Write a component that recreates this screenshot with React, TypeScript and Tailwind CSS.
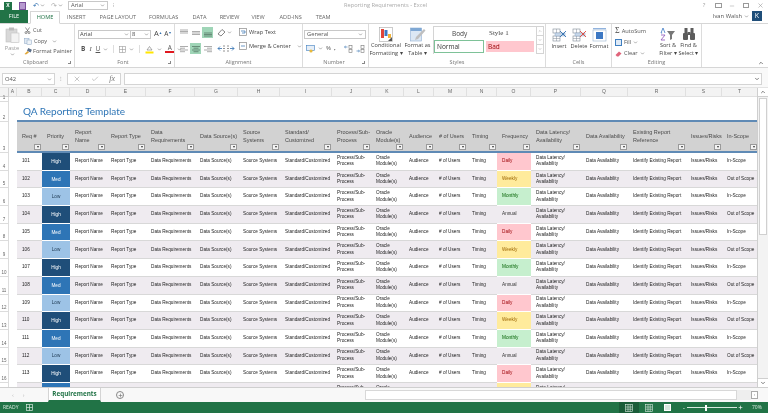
import { ChevronDown, ChevronUp, X, Check, Plus, Minus } from 'lucide-react'

const columns = ['A', 'B', 'C', 'D', 'E', 'F', 'G', 'H', 'I', 'J', 'K', 'L', 'M', 'N', 'O', 'P', 'Q', 'R', 'S', 'T']

const headers = [
  ['Req #'],
  ['Priority'],
  ['Report', 'Name'],
  ['Report Type'],
  ['Data', 'Requirements'],
  ['Data Source(s)'],
  ['Source', 'Systems'],
  ['Standard/', 'Customized'],
  ['Process/Sub-', 'Process'],
  ['Oracle', 'Module(s)'],
  ['Audience'],
  ['# of Users'],
  ['Timing'],
  ['Frequency'],
  ['Data Latency/', 'Availability'],
  ['Data Availability'],
  ['Existing Report', 'Reference'],
  ['Issues/Risks'],
  ['In-Scope'],
]

const priorities = [
  { label: 'High', cls: 'bg-[#1f4e79] text-white' },
  { label: 'Med', cls: 'bg-[#2e75b6] text-white' },
  { label: 'Low', cls: 'bg-[#9dc3e6] text-[#1f3a54]' },
]

const frequencies = [
  { label: 'Daily', cls: 'bg-[#ffc7ce] text-[#9c0006]' },
  { label: 'Weekly', cls: 'bg-[#ffeb9c] text-[#9c6500]' },
  { label: 'Monthly', cls: 'bg-[#c6efce] text-[#006100]' },
  { label: 'Annual', cls: 'text-[#333]' },
]

const rows = Array.from({ length: 14 }, (_, i) => i)

const gridCols =
  'grid-cols-[9px_8px_25px_28px_36px_40px_49px_43px_42px_52px_39px_33px_30px_33px_30px_34px_50px_47px_58px_36px_36px]'

function Caret() {
  return <ChevronDown className="size-[5px] shrink-0 text-[#666]" strokeWidth={2.5} />
}

function FilterButton() {
  return (
    <span className="absolute bottom-[1px] right-[1px] flex h-[6px] w-[7px] items-center justify-center border border-[#9a9a9a] bg-[#f4f4f4]">
      <span className="h-0 w-0 border-x-[1.5px] border-t-[2px] border-x-transparent border-t-[#333]" />
    </span>
  )
}

function Group({ label, width, launcher, children }: { label: string; width: string; launcher?: boolean; children: React.ReactNode }) {
  return (
    <div className={`flex shrink-0 flex-col border-r border-[#dcdcdc] ${width}`}>
      <div className="flex min-h-0 flex-1">{children}</div>
      <div className="flex h-[10px] items-center px-[3px] text-[5.5px] text-[#777]">
        <span className="flex-1 text-center">{label}</span>
        {launcher && <span className="h-[3px] w-[3px] border-b border-r border-[#888]" />}
      </div>
    </div>
  )
}

function BigButton({ lines, width, children }: { lines: string[]; width: string; children: React.ReactNode }) {
  return (
    <div className={`flex shrink-0 flex-col items-center pt-[2px] text-[5.6px] leading-[7.5px] text-[#444] ${width}`}>
      <div className="flex h-[17px] items-center">{children}</div>
      {lines.map((l) => (
        <span key={l} className="whitespace-nowrap">{l}</span>
      ))}
    </div>
  )
}

function Ribbon() {
  return (
    <div className="flex h-[44px] shrink-0 border-b border-[#d6d6d6] bg-white font-['Open_Sans',sans-serif]">
      <Group label="Clipboard" width="w-[75px]" launcher>
        <div className="flex w-[24px] flex-col items-center pt-[3px] text-[5.6px] leading-[7px] text-[#999]">
          <svg width="15" height="16" viewBox="0 0 15 16">
            <rect x="1" y="2" width="11" height="13" fill="#d8d8d8" stroke="#c0c0c0" strokeWidth="0.6" />
            <rect x="4" y="0.5" width="5" height="3" fill="#bbb" />
            <rect x="6" y="6" width="8" height="9.5" fill="#f3f3f3" stroke="#c4c4c4" strokeWidth="0.6" />
          </svg>
          <span className="mt-[2px]">Paste</span>
          <Caret />
        </div>
        <div className="flex flex-col gap-[3.5px] pt-[3px] text-[5.6px] leading-[7px] text-[#555]">
          <div className="flex items-center gap-[2px]">
            <svg width="7" height="7" viewBox="0 0 7 7" fill="none" stroke="#666" strokeWidth="0.7">
              <path d="M1.5 0.5 4.5 5M5.5 0.5 2.5 5" />
              <circle cx="2" cy="5.6" r="1" />
              <circle cx="5" cy="5.6" r="1" />
            </svg>
            Cut
          </div>
          <div className="flex items-center gap-[2px]">
            <svg width="8" height="7" viewBox="0 0 8 7">
              <rect x="0.5" y="0.5" width="4.5" height="5" fill="#dfe8f2" stroke="#8ba6c4" strokeWidth="0.5" />
              <rect x="3" y="2" width="4.5" height="4.5" fill="#eef3f8" stroke="#8ba6c4" strokeWidth="0.5" />
            </svg>
            Copy
            <span className="ml-[3px]"><Caret /></span>
          </div>
          <div className="flex items-center gap-[1px] whitespace-nowrap">
            <svg width="8" height="7" viewBox="0 0 8 7">
              <path d="M0.5 6 3.5 3 5 4.5 2 6.5Z" fill="#e2a83a" />
              <rect x="3.5" y="0.5" width="4" height="3" fill="#5b6f8a" transform="rotate(25 5 2)" />
            </svg>
            Format Painter
          </div>
        </div>
      </Group>

      <Group label="Font" width="w-[100px]" launcher>
        <div className="flex flex-1 flex-col gap-[6px] pl-[3px] pt-[6px] text-[#444]">
          <div className="flex h-[8px] items-center">
            <div className="flex h-[9px] w-[53px] items-center justify-between border border-[#c8c8c8] px-[1px] text-[5.8px]">
              Arial <Caret />
            </div>
            <div className="flex h-[9px] w-[20px] items-center justify-between border border-l-0 border-[#c8c8c8] px-[1px] text-[5.8px]">
              8 <Caret />
            </div>
            <span className="ml-[3px] text-[7.5px]">A</span>
            <span className="mb-[3px] text-[3.5px] text-[#2f6fb0]">▲</span>
            <span className="ml-[2px] text-[6.5px]">A</span>
            <span className="mb-[3px] text-[3.5px] text-[#2f6fb0]">▼</span>
          </div>
          <div className="flex h-[10px] items-center gap-[3px] pl-[3px] text-[6.5px] text-[#555]">
            <span className="font-bold">B</span>
            <span className="px-[1px] font-['Liberation_Serif',serif] italic">I</span>
            <span className="underline">U</span>
            <Caret />
            <span className="mx-[2px] h-[8px] w-px bg-[#ddd]" />
            <svg width="7" height="7" viewBox="0 0 7 7" fill="none" stroke="#999" strokeWidth="0.6">
              <rect x="0.5" y="0.5" width="6" height="6" />
              <path d="M3.5 0.5v6M0.5 3.5h6" />
            </svg>
            <Caret />
            <span className="mx-[2px] h-[8px] w-px bg-[#ddd]" />
            <svg width="9" height="9" viewBox="0 0 9 9">
              <path d="M2 5 4.5 1.5 7 5Z" fill="#fff" stroke="#777" strokeWidth="0.6" />
              <rect x="0.5" y="6.5" width="8" height="2" fill="#ffe600" />
            </svg>
            <Caret />
            <div className="flex w-[9px] flex-col items-center text-[6.5px] leading-[6.5px]">
              A
              <span className="h-[2px] w-[9px] bg-[#e0181f]" />
            </div>
            <Caret />
          </div>
        </div>
      </Group>

      <Group label="Alignment" width="w-[128px]">
        <div className="flex flex-col gap-[5px] pl-[3px] pt-[3px]">
          <div className="flex items-center gap-[1px]">
            <AlignIcon kind="top" />
            <AlignIcon kind="middle" />
            <AlignIcon kind="bottom" active />
            <svg className="ml-[3px]" width="9" height="9" viewBox="0 0 9 9" fill="none" stroke="#666" strokeWidth="0.8">
              <path d="M1 6 5 1.5 8 4 4 8Z" />
            </svg>
            <Caret />
          </div>
          <div className="flex items-center gap-[1px]">
            <AlignIcon kind="left" />
            <AlignIcon kind="center" active />
            <AlignIcon kind="right" />
            <svg className="ml-[3px]" width="18" height="9" viewBox="0 0 18 9" fill="none" strokeWidth="0.8">
              <path d="M1 4.5h4M1 4.5l2-2M1 4.5l2 2" stroke="#2f6fb0" />
              <path d="M6 2h2M6 4.5h2M6 7h2M10 2h2M10 4.5h2M10 7h2" stroke="#777" />
              <path d="M17 4.5h-4M17 4.5l-2-2M17 4.5l-2 2" stroke="#2f6fb0" />
            </svg>
          </div>
        </div>
        <div className="ml-[4px] flex flex-col gap-[6px] pt-[4px] text-[5.7px] leading-[8px] text-[#444]">
          <div className="flex items-center gap-[2px]">
            <svg width="8" height="8" viewBox="0 0 8 8" fill="none" strokeWidth="0.7">
              <rect x="0.5" y="0.5" width="7" height="7" stroke="#8a8a8a" />
              <path d="M2 3h4v2H3" stroke="#2f6fb0" />
            </svg>
            Wrap Text
          </div>
          <div className="flex items-center gap-[2px] whitespace-nowrap">
            <svg width="8" height="8" viewBox="0 0 8 8" fill="none" strokeWidth="0.7">
              <rect x="0.5" y="0.5" width="7" height="7" stroke="#8a8a8a" />
              <path d="M2 4h4" stroke="#2f6fb0" />
            </svg>
            Merge &amp; Center
            <span className="ml-[4px]"><Caret /></span>
          </div>
        </div>
      </Group>

      <Group label="Number" width="w-[66px]" launcher>
        <div className="flex flex-1 flex-col gap-[5px] pl-[1px] pt-[6px] pr-[2px] text-[#555]">
          <div className="flex h-[9px] items-center justify-between border border-[#c8c8c8] px-[2px] text-[5.8px]">
            General <Caret />
          </div>
          <div className="flex items-center gap-[3px] pl-[2px] text-[6px]">
            <svg width="9" height="8" viewBox="0 0 9 8">
              <rect x="0.5" y="0.5" width="8" height="5" fill="#e6eef7" stroke="#3f7fc0" strokeWidth="0.6" />
              <circle cx="5" cy="6" r="1.6" fill="#e8b93a" />
            </svg>
            <Caret />
            <span>%</span>
            <span className="font-bold">,</span>
            <svg className="ml-[5px]" width="9" height="8" viewBox="0 0 9 8" fill="none" stroke="#2f6fb0" strokeWidth="0.6">
              <path d="M0.5 2h3M0.5 2l1.2-1M0.5 2l1.2 1" />
              <rect x="5" y="0.5" width="3" height="3" stroke="#777" />
              <rect x="5" y="4.5" width="3" height="3" stroke="#777" />
            </svg>
            <svg width="9" height="8" viewBox="0 0 9 8" fill="none" stroke="#2f6fb0" strokeWidth="0.6">
              <path d="M0.5 6h3M3.5 6l-1.2-1M3.5 6l-1.2 1" />
              <rect x="5" y="0.5" width="3" height="3" stroke="#777" />
              <rect x="5" y="4.5" width="3" height="3" stroke="#777" />
            </svg>
          </div>
        </div>
      </Group>

      <Group label="Styles" width="w-[177px]">
        <BigButton lines={['Conditional', 'Formatting ▾']} width="w-[34px]">
          <svg width="14" height="15" viewBox="0 0 14 15">
            <rect x="0.5" y="0.5" width="13" height="14" fill="#fff" stroke="#a8a8a8" strokeWidth="0.6" />
            <rect x="2" y="2" width="3" height="9" fill="#e0453a" />
            <rect x="5.5" y="3" width="3" height="6" fill="#3c78c4" />
            <rect x="9" y="7" width="3" height="4" fill="#f0b43a" />
            <path d="M9 14 13 10v4Z" fill="#555" />
          </svg>
        </BigButton>
        <BigButton lines={['Format as', 'Table ▾']} width="w-[29px]">
          <svg width="16" height="15" viewBox="0 0 16 15">
            <rect x="0.5" y="1" width="11" height="13" fill="#dce8f4" stroke="#8fb0d4" strokeWidth="0.6" />
            <rect x="0.5" y="1" width="11" height="3" fill="#7fa8d4" />
            <path d="M6 10 14 2l1.5 1.5L8 12l-3 1Z" fill="#bfbfbf" />
          </svg>
        </BigButton>
        <div className="ml-[1px] mt-[2px] flex h-[28px] w-[103px] flex-col border-l border-t border-[#d4d4d4] text-[6.5px] text-[#444]">
          <div className="flex h-[13px] items-center">
            <span className="w-[54px] pl-[18px]">Body</span>
            <span className="pl-[1px] font-['Liberation_Serif',serif] text-[7px]">Style 1</span>
          </div>
          <div className="flex h-[13px] items-center gap-[2px]">
            <span className="flex h-[13px] w-[50px] items-center border border-[#7ec298] pl-[2px] text-[#333]">Normal</span>
            <span className="flex h-[11px] w-[48px] items-center bg-[#ffc7ce] pl-[2px] text-[#9c0006]">Bad</span>
          </div>
        </div>
        <div className="mt-[2px] flex h-[28px] w-[8px] shrink-0 flex-col self-start border border-[#d4d4d4] text-[#777]">
          <span className="flex flex-1 items-center justify-center"><ChevronUp className="size-[4px]" /></span>
          <span className="flex flex-1 items-center justify-center border-y border-[#d4d4d4]"><ChevronDown className="size-[4px]" /></span>
          <span className="flex flex-1 items-center justify-center"><ChevronDown className="size-[4px]" /></span>
        </div>
      </Group>

      <Group label="Cells" width="w-[66px]">
        <div className="ml-[3px] flex">
          <BigButton lines={['Insert']} width="w-[20px]">
            <CellIcon accent="#2f6fb0" />
          </BigButton>
          <BigButton lines={['Delete']} width="w-[20px]">
            <CellIcon accent="#e0453a" />
          </BigButton>
          <BigButton lines={['Format']} width="w-[20px]">
            <svg width="15" height="14" viewBox="0 0 15 14">
              <rect x="1" y="2" width="13" height="11" fill="#fff" stroke="#9ab4d0" strokeWidth="0.6" />
              <rect x="4" y="4" width="7" height="7" fill="#3c78c4" />
              <path d="M1 0.7h13" stroke="#3c78c4" strokeWidth="0.7" />
            </svg>
          </BigButton>
        </div>
      </Group>

      <div className="flex w-[90px] shrink-0 flex-col border-r border-[#dcdcdc]">
        <div className="flex min-h-0 flex-1">
          <div className="flex w-[46px] flex-col gap-[3px] pl-[3px] pt-[3px] text-[5.7px] leading-[8px] text-[#555]">
            <div className="flex items-center gap-[2px]">
              <span className="font-['Liberation_Serif',serif] text-[8px] leading-[8px] text-[#444]">Σ</span>
              AutoSum
            </div>
            <div className="flex items-center gap-[2px]">
              <span className="h-[7px] w-[7px] border border-[#3f7fc0] bg-[#dfeaf6]" />
              Fill
              <Caret />
            </div>
            <div className="flex items-center gap-[2px]">
              <svg width="7" height="7" viewBox="0 0 7 7">
                <path d="M0.5 5 4 1.5 6.5 3.5 3.5 6.5H2Z" fill="#e0647a" />
              </svg>
              Clear
              <Caret />
            </div>
          </div>
          <BigButton lines={['Sort &', 'Filter ▾']} width="w-[20px]">
            <svg width="16" height="14" viewBox="0 0 16 14">
              <path d="M3 1 1 6h1.2M3 1l2 5" stroke="#3c78c4" fill="none" strokeWidth="0.8" />
              <path d="M1 8h4L1 13h4" stroke="#8a52b8" fill="none" strokeWidth="0.8" />
              <path d="M7 4h8l-3 4v4l-2 1V8Z" fill="#777" />
            </svg>
          </BigButton>
          <BigButton lines={['Find &', 'Select ▾']} width="w-[21px]">
            <svg width="14" height="14" viewBox="0 0 14 14" fill="#5c5c5c">
              <rect x="1" y="6" width="5" height="7" rx="1" />
              <rect x="8" y="6" width="5" height="7" rx="1" />
              <rect x="2.5" y="1" width="3" height="5" />
              <rect x="8.5" y="1" width="3" height="5" />
              <rect x="5.5" y="5" width="3" height="3" />
            </svg>
          </BigButton>
        </div>
        <div className="flex h-[10px] items-center justify-center text-[5.5px] text-[#777]">Editing</div>
      </div>

      <div className="flex flex-1 items-end justify-end pb-[1px] pr-[4px]">
        <ChevronUp className="size-[6px] text-[#555]" strokeWidth={3} />
      </div>
    </div>
  )
}

function AlignIcon({ kind, active }: { kind: string; active?: boolean }) {
  const lines: Record<string, string> = {
    top: 'M1 2h8M1 3.5h8M1 5h8',
    middle: 'M1 3.5h8M1 5h8M1 6.5h8',
    bottom: 'M1 5h8M1 6.5h8M1 8h8',
    left: 'M1 2.5h8M1 4.2h5M1 6h8M1 7.7h5',
    center: 'M1 2.5h8M2.5 4.2h5M1 6h8M2.5 7.7h5',
    right: 'M1 2.5h8M4 4.2h5M1 6h8M4 7.7h5',
  }
  return (
    <span className={`flex h-[11px] w-[11px] items-center justify-center ${active ? 'bg-[#9fd5b7]' : ''}`}>
      <svg width="10" height="10" viewBox="0 0 10 10" fill="none" stroke={active ? '#4f6f5d' : '#8a8a8a'} strokeWidth="0.7">
        <path d={lines[kind]} />
      </svg>
    </span>
  )
}

function CellIcon({ accent }: { accent: string }) {
  return (
    <svg width="15" height="14" viewBox="0 0 15 14" fill="none">
      <rect x="1" y="1" width="7" height="4" stroke="#7f8a96" strokeWidth="0.6" />
      <rect x="1" y="8" width="7" height="5" stroke="#7f8a96" strokeWidth="0.6" />
      <path d="M1 10.5h7M4.5 8v5M4.5 1v4" stroke="#7f8a96" strokeWidth="0.5" />
      <rect x="3" y="5" width="10" height="3" fill="#c9d9ea" stroke="#7f9cc0" strokeWidth="0.4" />
      <path d="M8 3l6 6M14 3l-6 6" stroke={accent} strokeWidth="0.9" />
    </svg>
  )
}

function TitleBar() {
  return (
    <div className="flex h-[11px] shrink-0 items-center bg-white font-['Open_Sans',sans-serif]">
      <div className="flex w-[344px] items-center pl-[4px]">
        <span className="flex h-[8px] w-[8px] items-center justify-center bg-[#217346] text-[5px] font-bold text-white">X</span>
        <span className="ml-[7px] h-[8px] w-[7px] border border-[#7a4f9a] bg-[#b79ad0]" />
        <span className="ml-[7px] text-[7px] leading-[8px] text-[#2f6fb0]">↶</span>
        <span className="ml-[1px]"><Caret /></span>
        <span className="ml-[6px] text-[7px] leading-[8px] text-[#aaa]">↷</span>
        <span className="ml-[1px]"><Caret /></span>
        <div className="ml-[5px] flex h-[9px] w-[40px] items-center justify-between border border-[#c8c8c8] px-[2px] text-[5.8px] text-[#555]">
          Arial <Caret />
        </div>
        <span className="ml-[5px] text-[5px] text-[#777]">⁝</span>
      </div>
      <span className="text-[5.7px] text-[#aaa]">Reporting Requirements - Excel</span>
      <div className="ml-auto flex items-center pr-[1px] text-[#9a9a9a]">
        <span className="flex w-[14px] justify-center text-[6px] leading-[7px]">?</span>
        <span className="flex w-[14px] justify-center"><span className="h-[5px] w-[7px] border border-[#9a9a9a]" /></span>
        <span className="flex w-[14px] justify-center"><Minus className="size-[6px]" /></span>
        <span className="flex w-[14px] justify-center"><span className="h-[5px] w-[6px] border border-[#9a9a9a]" /></span>
        <span className="flex w-[14px] justify-center"><X className="size-[7px]" /></span>
      </div>
    </div>
  )
}

function TabBar() {
  const tabs = [
    ['INSERT', 'ml-[7px]'],
    ['PAGE LAYOUT', 'ml-[14px]'],
    ['FORMULAS', 'ml-[13px]'],
    ['DATA', 'ml-[14px]'],
    ['REVIEW', 'ml-[13px]'],
    ['VIEW', 'ml-[12px]'],
    ['ADD-INS', 'ml-[15px]'],
    ['TEAM', 'ml-[14px]'],
  ]
  return (
    <div className="flex h-[13px] shrink-0 items-end border-b border-[#d6d6d6] bg-white font-['Open_Sans',sans-serif] text-[5.6px] text-[#666]">
      <div className="flex h-[13px] w-[28px] items-center justify-center bg-[#217346] text-white">FILE</div>
      <div className="-mb-px ml-[2px] flex h-[13px] w-[30px] items-center justify-center border border-[#d6d6d6] border-b-white bg-white text-[#217346]">HOME</div>
      {tabs.map(([t, m]) => (
        <div key={t} className={`flex h-[12px] items-center whitespace-nowrap ${m}`}>{t}</div>
      ))}
      <div className="ml-auto flex h-[13px] items-center pb-[1px] pr-[6px] text-[#555]">
        <span className="text-[5.8px]">Ivan Walsh</span>
        <span className="ml-[2px]"><Caret /></span>
        <span className="ml-[3px] flex h-[10px] w-[10px] items-center justify-center bg-[#1f4e79] text-[7px] text-white">K</span>
      </div>
    </div>
  )
}

function FormulaBar() {
  return (
    <div className="flex h-[20px] shrink-0 items-center gap-[3px] border-b border-[#e3e3e3] bg-[#f9f9f9] pl-[2px] pr-[6px] pt-[3px] font-['Open_Sans',sans-serif]">
      <div className="flex h-[12px] w-[53px] items-center justify-between border border-[#d4d4d4] bg-white px-[2px] text-[5.8px] text-[#555]">
        O42 <Caret />
      </div>
      <span className="mx-[2px] text-[6px] text-[#999]">⁝</span>
      <div className="flex h-[12px] w-[54px] items-center justify-around border border-[#d4d4d4] bg-white text-[#aaa]">
        <X className="size-[8px]" />
        <Check className="size-[8px]" />
        <span className="font-['Liberation_Serif',serif] text-[8px] italic text-[#777]">fx</span>
      </div>
      <div className="flex h-[12px] flex-1 items-center justify-end border border-[#d4d4d4] bg-white pr-[1px]">
        <ChevronDown className="size-[6px] text-[#555]" strokeWidth={3} />
      </div>
    </div>
  )
}

function Cell({ lines, className = '' }: { lines?: string[]; className?: string }) {
  return (
    <div className={`flex flex-col justify-center overflow-hidden whitespace-nowrap pl-[5px] leading-[6.5px] ${className}`}>
      {lines?.map((l) => <span key={l}>{l}</span>)}
    </div>
  )
}

function Sheet() {
  return (
    <div className="flex min-h-0 flex-1 border-b border-[#cfcfcf] bg-white font-['Liberation_Sans',sans-serif]">
      <div className={`grid min-w-0 flex-1 content-start overflow-hidden ${gridCols} grid-rows-[9px_5px_20px_31px] auto-rows-[17.7px]`}>
        <div className="border-b border-r border-[#cfcfcf] bg-[#f3f3f3]" />
        {columns.map((c) => (
          <div key={c} className="flex items-center justify-center border-b border-r border-[#e0e0e0] bg-[#f3f3f3] text-[5px] text-[#666]">{c}</div>
        ))}

        <RowNumber n={1} />
        <div className="col-span-20" />
        <RowNumber n={2} />
        <div />
        <div className="col-span-19 flex items-center border-b-2 border-[#5f8ab5] pl-[6px]">
          <span className="whitespace-nowrap font-['Lato',sans-serif] text-[10px] leading-[14px] text-[#2e75b6]">QA Reporting Template</span>
        </div>

        <RowNumber n={3} />
        <div />
        {headers.map((h) => (
          <div key={h[0] + h.length} className="relative flex flex-col justify-center whitespace-nowrap border-b-2 border-[#5f8ab5] bg-[#d2d2d2] pb-[1px] pl-[5px] text-[5.5px] leading-[8px] text-[#4a4a4a]">
            {h.map((l) => <span key={l}>{l}</span>)}
            <FilterButton />
          </div>
        ))}

        {rows.map((i) => {
          const p = priorities[i % 3]
          const f = frequencies[i % 4]
          const stripe = i % 2 === 1 ? 'bg-[#efebf0]' : 'bg-white'
          const cls = `${stripe} border-b border-[#d8d8d8] text-[#222] text-[4.7px]`
          // last row is cut by the sheet tabs, only the wrapped first lines show
          const partial = i === 13
          const single = (s: string) => (partial ? undefined : [s])
          return (
            <div key={i} className="contents">
              <RowNumber n={partial ? undefined : i + 4} />
              <div />
              <Cell className={cls} lines={single(String(101 + i))} />
              <div className={`flex items-center justify-center border-b border-white text-[4.7px] ${p.cls}`}>{!partial && p.label}</div>
              <Cell className={cls} lines={single('Report Name')} />
              <Cell className={cls} lines={single('Report Type')} />
              <Cell className={cls} lines={single('Data Requirements')} />
              <Cell className={cls} lines={single('Data Source(s)')} />
              <Cell className={cls} lines={single('Source Systems')} />
              <Cell className={cls} lines={single('Standard/Customized')} />
              <Cell className={cls} lines={['Process/Sub-', 'Process']} />
              <Cell className={cls} lines={['Oracle', 'Module(s)']} />
              <Cell className={cls} lines={single('Audience')} />
              <Cell className={cls} lines={single('# of Users')} />
              <Cell className={cls} lines={single('Timing')} />
              <Cell className={`border-b border-white text-[4.7px] ${f.cls} ${f.label === 'Annual' ? stripe : ''}`} lines={single(f.label)} />
              <Cell className={cls} lines={['Data Latency/', 'Availability']} />
              <Cell className={cls} lines={single('Data Availability')} />
              <Cell className={cls} lines={single('Identify Existing Report')} />
              <Cell className={cls} lines={single('Issues/Risks')} />
              <Cell className={cls} lines={single(i % 2 === 0 ? 'In-Scope' : 'Out of Scope')} />
            </div>
          )
        })}
      </div>
      <div className="flex w-[11px] shrink-0 flex-col border-l border-[#cfcfcf] bg-[#f3f3f3] text-[#555]">
        <span className="flex h-[9px] items-center justify-center border-b border-[#cfcfcf] bg-white">
          <ChevronUp className="size-[6px]" strokeWidth={3} />
        </span>
        <div className="mx-[1px] mt-[1px] h-[137px] border border-[#d0d0d0] bg-white" />
        <span className="mt-auto flex h-[9px] items-center justify-center border-t border-[#cfcfcf] bg-white">
          <ChevronDown className="size-[6px]" strokeWidth={3} />
        </span>
      </div>
    </div>
  )
}

function RowNumber({ n }: { n?: number }) {
  return (
    <div className="flex items-end justify-center border-b border-r border-[#dcdcdc] bg-white pb-[1px] text-[4.5px] leading-[5px] text-[#666]">{n}</div>
  )
}

function SheetTabs() {
  return (
    <div className="flex h-[14px] shrink-0 items-stretch bg-[#f8f8f8] font-['Open_Sans',sans-serif]">
      <div className="flex w-[48px] items-center gap-[9px] pl-[12px] text-[6px] leading-[8px] text-[#bbb]">
        <span>‹</span>
        <span>›</span>
      </div>
      <div className="flex w-[53px] items-center justify-center border-x border-b-2 border-x-[#d4d4d4] border-b-[#217346] bg-white text-[6.3px] font-bold leading-[8px] text-[#217346]">
        Requirements
      </div>
      <div className="ml-[15px] flex items-center">
        <span className="flex h-[8px] w-[8px] items-center justify-center rounded-full border border-[#888] text-[#777]">
          <Plus className="size-[5px]" strokeWidth={3} />
        </span>
      </div>
      <div className="ml-auto flex items-center pr-[10px]">
        <div className="h-[10px] w-[372px] border border-[#d8d8d8] bg-white" />
        <div className="h-[10px] w-[14px] bg-[#eeeeee]" />
        <span className="flex h-[8px] w-[7px] items-center justify-center border border-[#aaa] bg-white text-[4px] leading-[6px] text-[#555]">›</span>
      </div>
    </div>
  )
}

function StatusBar() {
  return (
    <div className="flex h-[11px] shrink-0 items-center bg-[#217346] pl-[3px] font-['Open_Sans',sans-serif] text-[5px] leading-[7px] text-[#d8e8de]">
      <span>READY</span>
      <svg className="ml-[8px]" width="7" height="7" viewBox="0 0 7 7" fill="none" stroke="#d8e8de" strokeWidth="0.7">
        <rect x="0.5" y="0.5" width="6" height="6" />
        <path d="M0.5 3.5h6M3.5 0.5v6" />
      </svg>
      <div className="ml-auto flex h-[11px] items-center">
        <span className="flex h-[11px] w-[20px] items-center justify-center bg-[#1a5c38]">
          <ViewIcon />
        </span>
        <span className="ml-[-2px] flex h-[11px] w-[24px] items-center justify-center"><ViewIcon /></span>
        <span className="flex h-[11px] w-[14px] items-center justify-center"><span className="h-[7px] w-[7px] border border-white bg-[#d8e8de]" /></span>
        <span className="ml-[8px] text-[7px] leading-[7px]">-</span>
        <div className="ml-[2px] flex h-[7px] w-[50px] items-center">
          <div className="h-px w-[18px] bg-[#d8e8de]" />
          <div className="h-[6px] w-[2px] bg-white" />
          <div className="h-px flex-1 bg-[#d8e8de]" />
        </div>
        <Plus className="ml-[1px] size-[5px] text-white" strokeWidth={3} />
        <span className="ml-[9px] w-[16px] text-[5px]">70%</span>
      </div>
    </div>
  )
}

function ViewIcon() {
  return (
    <svg width="8" height="8" viewBox="0 0 8 8" fill="none" stroke="#d8e8de" strokeWidth="0.6">
      <rect x="0.5" y="0.5" width="7" height="7" />
      <path d="M0.5 3h7M0.5 5.2h7M3 0.5v7M5.2 0.5v7" />
    </svg>
  )
}

export default function App() {
  return (
    <div className="flex h-[413px] w-[768px] flex-col overflow-hidden bg-white blur-[0.3px]">
      <TitleBar />
      <TabBar />
      <Ribbon />
      <FormulaBar />
      <Sheet />
      <SheetTabs />
      <StatusBar />
    </div>
  )
}
